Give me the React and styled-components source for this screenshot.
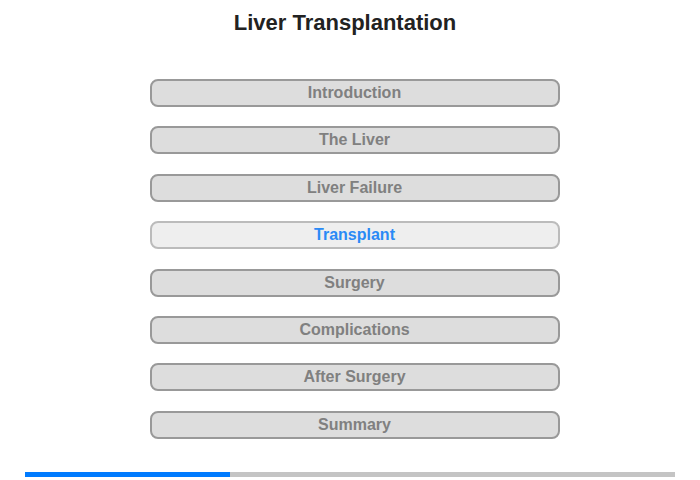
import styled, { createGlobalStyle } from 'styled-components';

const GlobalStyle = createGlobalStyle`
  body {
    margin: 0;
    background: #fff;
    font-family: "Liberation Sans", Arial, sans-serif;
  }
`;

const sections = [
  'Introduction',
  'The Liver',
  'Liver Failure',
  'Transplant',
  'Surgery',
  'Complications',
  'After Surgery',
  'Summary',
];

const Page = styled.div`
  width: 700px;
  height: 480px;
  display: flex;
  flex-direction: column;
  align-items: center;
`;

const Title = styled.h1`
  margin: 10px 10px 0 0;
  font-size: 22px;
  line-height: 26px;
  font-weight: bold;
  color: #222;
`;

const Menu = styled.nav`
  margin-top: 43px;
  display: flex;
  flex-direction: column;
  gap: 19.4px;
  padding-left: 9px;
`;

const MenuButton = styled.div`
  box-sizing: border-box;
  width: 410px;
  height: 28px;
  border: 2px solid ${p => (p.$active ? '#bbb' : '#999')};
  border-radius: 8px;
  background: ${p => (p.$active ? '#eee' : '#ddd')};
  color: ${p => (p.$active ? '#2a8af6' : '#808080')};
  font-size: 16px;
  font-weight: bold;
  display: flex;
  align-items: center;
  justify-content: center;
  cursor: pointer;
`;

const Progress = styled.div`
  margin-top: 33px;
  width: 650px;
  height: 5px;
  background: #c4c4c4;
  display: flex;
`;

const ProgressFill = styled.div`
  height: 100%;
  background: #007bff;
`;

export default function App() {
  const active = 'Transplant';
  return (
    <Page>
      <GlobalStyle />
      <Title>Liver Transplantation</Title>
      <Menu>
        {sections.map(s => (
          <MenuButton key={s} $active={s === active}>{s}</MenuButton>
        ))}
      </Menu>
      <Progress>
        <ProgressFill style={{ width: `${(205 / 650) * 100}%` }} />
      </Progress>
    </Page>
  );
}
